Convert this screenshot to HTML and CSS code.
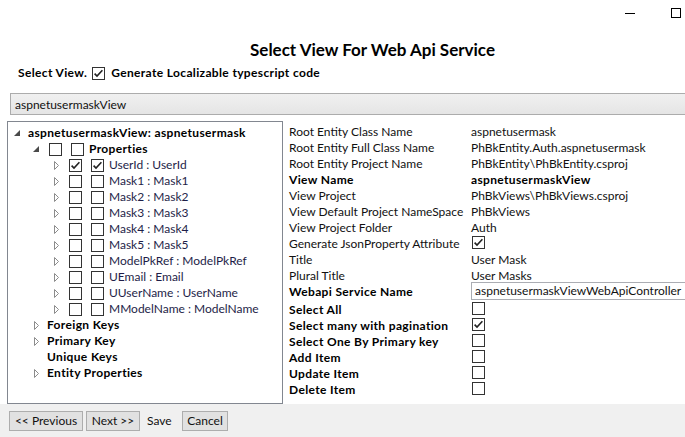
FILE: index.html
```html
<!DOCTYPE html>
<html>
<head>
<meta charset="utf-8">
<link rel="stylesheet" href="styles.css">
</head>
<body>
<div class="window">
  <div class="titlebar">
    <span class="capbtn"><svg width="10" height="10" viewBox="0 0 10 10"><path d="M0 5.5H10" stroke="#000" stroke-width="1"/></svg></span>
    <span class="capbtn"><svg width="10" height="10" viewBox="0 0 10 10"><rect x="0.5" y="0.5" width="9" height="9" fill="none" stroke="#000"/></svg></span>
    <span class="capbtn"><svg width="10" height="10" viewBox="0 0 10 10"><path d="M0 0L10 10M10 0L0 10" stroke="#000" stroke-width="1"/></svg></span>
  </div>

  <h1 class="title">Select View For Web Api Service</h1>

  <div class="options">
    <span class="bold">Select View.</span>
    <span class="cb on opt-cb"><svg viewBox="0 0 11 11"><path d="M1.6 5.6L4 8.1L9.4 2.2"/></svg></span>
    <span class="bold opt-label">Generate Localizable typescript code</span>
  </div>

  <div class="combo">aspnetusermaskView</div>

  <div class="main">
    <div class="tree">
      <div class="row l0"><span class="exp"><svg width="6" height="6" viewBox="0 0 6 6"><path d="M6 0V6H0Z" class="tri-open"/></svg></span><span class="bold txt">aspnetusermaskView: aspnetusermask</span></div>
      <div class="row l1"><span class="exp"><svg width="6" height="6" viewBox="0 0 6 6"><path d="M6 0V6H0Z" class="tri-open"/></svg></span><span class="cb"></span><span class="cb cb2"></span><span class="bold ctxt">Properties</span></div>
      <div class="row l2"><span class="exp"><svg width="5" height="9" viewBox="0 0 5 9"><path d="M0.5 0.5L4.5 4.5L0.5 8.5Z" class="tri-closed"/></svg></span><span class="cb on"><svg viewBox="0 0 11 11"><path d="M1.6 5.6L4 8.1L9.4 2.2"/></svg></span><span class="cb cb2 on"><svg viewBox="0 0 11 11"><path d="M1.6 5.6L4 8.1L9.4 2.2"/></svg></span><span class="ctxt field">UserId : UserId</span></div>
      <div class="row l2"><span class="exp"><svg width="5" height="9" viewBox="0 0 5 9"><path d="M0.5 0.5L4.5 4.5L0.5 8.5Z" class="tri-closed"/></svg></span><span class="cb"></span><span class="cb cb2"></span><span class="ctxt field">Mask1 : Mask1</span></div>
      <div class="row l2"><span class="exp"><svg width="5" height="9" viewBox="0 0 5 9"><path d="M0.5 0.5L4.5 4.5L0.5 8.5Z" class="tri-closed"/></svg></span><span class="cb"></span><span class="cb cb2"></span><span class="ctxt field">Mask2 : Mask2</span></div>
      <div class="row l2"><span class="exp"><svg width="5" height="9" viewBox="0 0 5 9"><path d="M0.5 0.5L4.5 4.5L0.5 8.5Z" class="tri-closed"/></svg></span><span class="cb"></span><span class="cb cb2"></span><span class="ctxt field">Mask3 : Mask3</span></div>
      <div class="row l2"><span class="exp"><svg width="5" height="9" viewBox="0 0 5 9"><path d="M0.5 0.5L4.5 4.5L0.5 8.5Z" class="tri-closed"/></svg></span><span class="cb"></span><span class="cb cb2"></span><span class="ctxt field">Mask4 : Mask4</span></div>
      <div class="row l2"><span class="exp"><svg width="5" height="9" viewBox="0 0 5 9"><path d="M0.5 0.5L4.5 4.5L0.5 8.5Z" class="tri-closed"/></svg></span><span class="cb"></span><span class="cb cb2"></span><span class="ctxt field">Mask5 : Mask5</span></div>
      <div class="row l2"><span class="exp"><svg width="5" height="9" viewBox="0 0 5 9"><path d="M0.5 0.5L4.5 4.5L0.5 8.5Z" class="tri-closed"/></svg></span><span class="cb"></span><span class="cb cb2"></span><span class="ctxt field">ModelPkRef : ModelPkRef</span></div>
      <div class="row l2"><span class="exp"><svg width="5" height="9" viewBox="0 0 5 9"><path d="M0.5 0.5L4.5 4.5L0.5 8.5Z" class="tri-closed"/></svg></span><span class="cb"></span><span class="cb cb2"></span><span class="ctxt field">UEmail : Email</span></div>
      <div class="row l2"><span class="exp"><svg width="5" height="9" viewBox="0 0 5 9"><path d="M0.5 0.5L4.5 4.5L0.5 8.5Z" class="tri-closed"/></svg></span><span class="cb"></span><span class="cb cb2"></span><span class="ctxt field">UUserName : UserName</span></div>
      <div class="row l2"><span class="exp"><svg width="5" height="9" viewBox="0 0 5 9"><path d="M0.5 0.5L4.5 4.5L0.5 8.5Z" class="tri-closed"/></svg></span><span class="cb"></span><span class="cb cb2"></span><span class="ctxt field">MModelName : ModelName</span></div>
      <div class="row l1"><span class="exp"><svg width="5" height="9" viewBox="0 0 5 9"><path d="M0.5 0.5L4.5 4.5L0.5 8.5Z" class="tri-closed"/></svg></span><span class="bold txt">Foreign Keys</span></div>
      <div class="row l1"><span class="exp"><svg width="5" height="9" viewBox="0 0 5 9"><path d="M0.5 0.5L4.5 4.5L0.5 8.5Z" class="tri-closed"/></svg></span><span class="bold txt">Primary Key</span></div>
      <div class="row l1"><span class="exp"></span><span class="bold txt">Unique Keys</span></div>
      <div class="row l1"><span class="exp"><svg width="5" height="9" viewBox="0 0 5 9"><path d="M0.5 0.5L4.5 4.5L0.5 8.5Z" class="tri-closed"/></svg></span><span class="bold txt">Entity Properties</span></div>
    </div>

    <div class="props">
      <span class="pl">Root Entity Class Name</span><span class="pv">aspnetusermask</span>
      <span class="pl">Root Entity Full Class Name</span><span class="pv">PhBkEntity.Auth.aspnetusermask</span>
      <span class="pl">Root Entity Project Name</span><span class="pv">PhBkEntity\PhBkEntity.csproj</span>
      <span class="pl bold">View Name</span><span class="pv bold">aspnetusermaskView</span>
      <span class="pl">View Project</span><span class="pv">PhBkViews\PhBkViews.csproj</span>
      <span class="pl">View Default Project NameSpace</span><span class="pv">PhBkViews</span>
      <span class="pl">View Project Folder</span><span class="pv">Auth</span>
      <span class="pl">Generate JsonProperty Attribute</span><span class="pv"><span class="cb on"><svg viewBox="0 0 11 11"><path d="M1.6 5.6L4 8.1L9.4 2.2"/></svg></span></span>
      <span class="pl">Title</span><span class="pv">User Mask</span>
      <span class="pl">Plural Title</span><span class="pv">User Masks</span>
      <span class="pl bold tall">Webapi Service Name</span><span class="pv"><span class="textbox">aspnetusermaskViewWebApiController</span></span>
      <span class="pl bold">Select All</span><span class="pv"><span class="cb"></span></span>
      <span class="pl bold">Select many with pagination</span><span class="pv"><span class="cb on"><svg viewBox="0 0 11 11"><path d="M1.6 5.6L4 8.1L9.4 2.2"/></svg></span></span>
      <span class="pl bold">Select One By Primary key</span><span class="pv"><span class="cb"></span></span>
      <span class="pl bold">Add Item</span><span class="pv"><span class="cb"></span></span>
      <span class="pl bold">Update Item</span><span class="pv"><span class="cb"></span></span>
      <span class="pl bold">Delete Item</span><span class="pv"><span class="cb"></span></span>
    </div>
  </div>

  <div class="footer">
    <button class="btn btn-prev">&lt;&lt; Previous</button>
    <button class="btn btn-next">Next &gt;&gt;</button>
    <span class="save">Save</span>
    <button class="btn btn-cancel">Cancel</button>
  </div>
</div>
</body>
</html>
```

FILE: styles.css
```css
html, body {
  margin: 0;
  padding: 0;
  overflow: hidden;
  background: #ffffff;
}

body {
  font-family: Lato, "Open Sans", sans-serif;
  font-size: 12px;
  color: #111111;
}

.window {
  width: 745px;
  height: 437px;
  display: flex;
  flex-direction: column;
  background: #ffffff;
}

.titlebar {
  height: 26px;
  display: flex;
  justify-content: flex-end;
  flex: none;
}

.capbtn {
  width: 46px;
  display: flex;
  align-items: center;
  justify-content: center;
}

.capbtn svg {
  display: block;
}

.title {
  margin: 14px 0 0;
  font-size: 17px;
  line-height: 20px;
  font-weight: bold;
  text-align: center;
  color: #000;
}

.bold {
  font-weight: bold;
  color: #000;
  letter-spacing: 0.35px;
}

.options {
  margin-top: 5px;
  height: 16px;
  display: flex;
  align-items: center;
  padding-left: 18px;
  line-height: 16px;
}

.opt-cb {
  margin-left: 5px;
}

.opt-label {
  margin-left: 6px;
}

.cb {
  box-sizing: border-box;
  width: 13px;
  height: 13px;
  border: 1px solid #333333;
  background: #ffffff;
  flex: none;
  display: inline-flex;
}

.cb svg {
  width: 11px;
  height: 11px;
  display: block;
}

.cb svg path {
  fill: none;
  stroke: #222222;
  stroke-width: 1.6;
}

.combo {
  box-sizing: border-box;
  margin: 12px 10px 0 10px;
  height: 22px;
  border: 1px solid #acacac;
  background: linear-gradient(#f0f0f0, #e5e5e5);
  padding: 1px 0 0 4px;
  line-height: 19px;
  color: #111;
}

.main {
  margin-top: 6px;
  height: 283px;
  display: flex;
  flex: none;
}

.tree {
  box-sizing: border-box;
  margin-left: 7px;
  width: 276px;
  height: 283px;
  border: 1px solid #828790;
  padding: 3px 0 0 1px;
  flex: none;
}

.row {
  height: 16px;
  display: flex;
  align-items: center;
  white-space: nowrap;
  line-height: 16px;
}

.row.l1 { padding-left: 19px; }
.row.l2 { padding-left: 39px; }

.exp {
  width: 16px;
  height: 16px;
  display: flex;
  align-items: center;
  justify-content: center;
  flex: none;
}

.tri-open {
  fill: #4a4a4a;
}

.tri-closed {
  fill: #ffffff;
  stroke: #8c8c8c;
  stroke-width: 1;
}

.txt {
  margin-left: 3px;
}

.row .cb {
  margin-left: 5px;
}

.row .cb.cb2 {
  margin-left: 9px;
}

.ctxt {
  margin-left: 5px;
}

.field {
  color: #1e1e48;
}

.props {
  flex: 1;
  margin: 0 0 0 6px;
  padding-top: 3px;
  display: grid;
  grid-template-columns: 182px 1fr;
  align-content: start;
  white-space: nowrap;
}

.pl, .pv {
  line-height: 16px;
  height: 16px;
  display: flex;
  align-items: flex-start;
}

.pl.tall {
  height: 18px;
}

.pv .cb {
  margin-left: 1px;
}

.textbox {
  box-sizing: border-box;
  display: block;
  margin-top: -2px;
  width: 100%;
  height: 18px;
  border: 1px solid #abadb3;
  background: #fff;
  padding: 0 0 0 3px;
  line-height: 16px;
  color: #111;
}

.footer {
  flex: 1;
  background: #f0f0f0;
  display: flex;
  align-items: flex-start;
  padding: 7px 0 0 9px;
}

.btn {
  box-sizing: border-box;
  height: 20px;
  border: 1px solid #adadad;
  background: #e1e1e1;
  font-family: inherit;
  font-size: 12px;
  color: #111;
  padding: 0;
  margin: 0;
  line-height: 16px;
  text-align: center;
}

.btn-prev { width: 74px; }
.btn-next { width: 54px; margin-left: 3px; }
.btn-cancel { width: 46px; }

.save {
  width: 24px;
  margin: 0 11px 0 7px;
  line-height: 20px;
  color: #111;
}
```
